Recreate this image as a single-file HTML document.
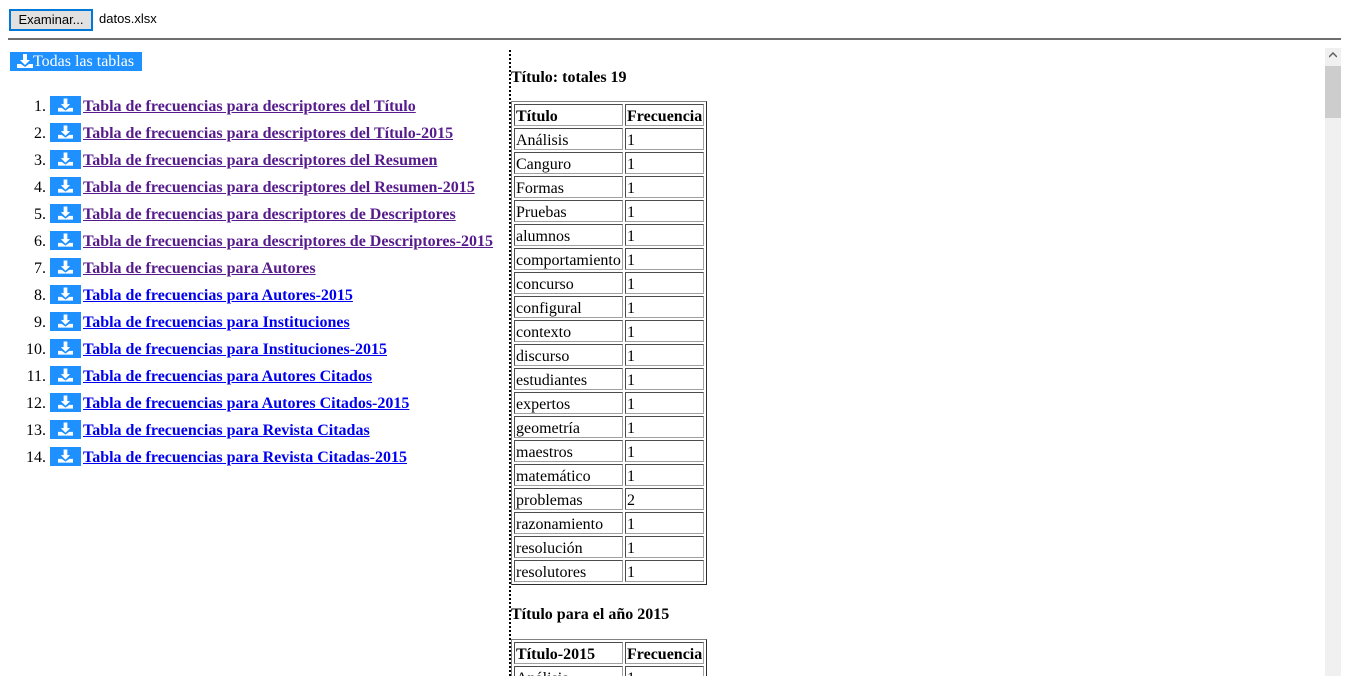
<!DOCTYPE html>
<html><head><meta charset="utf-8"><style>
body{margin:0;width:1349px;height:676px;overflow:hidden;background:#fff;font-family:"Liberation Serif",serif;position:relative}
.fb{position:absolute;left:9px;top:9px;width:80px;height:18px;border:2px solid #0078d7;background:#e1e1e1;font:13px "Liberation Sans",sans-serif;text-align:center;line-height:18px;box-sizing:content-box}
.fn{position:absolute;left:99px;top:11px;font:13px "Liberation Sans",sans-serif}
.hr{position:absolute;left:8px;top:38px;width:1333px;height:2px;background:#6e6e6e}
.all{position:absolute;left:10px;top:52px;width:132px;height:19px;background:#1e90ff;color:#fff;font-size:16px;line-height:20px}
.all svg{vertical-align:-2px;margin-left:7px}
.it{position:absolute;left:0;width:500px;height:20px;font-size:16px;line-height:20px;white-space:nowrap}
.num{position:absolute;left:0;width:46px;text-align:right}
.ib{position:absolute;left:50px;top:-1px;width:31px;height:19px;background:#1e90ff}
.ib svg{position:absolute;left:8px;top:2px}
.lk{position:absolute;left:83px;font-weight:bold;text-decoration:underline}
.v{color:#551a8b}.b{color:#0000ee}
.rp{position:absolute;left:509px;top:50px;width:815px;height:626px;border-left:2px dotted #000;overflow:hidden}
h4{margin:0;position:absolute;left:0;font-size:16px}
table{position:absolute;left:0;border:1px outset #808080;border-spacing:2px;font-size:16px}
td,th{border:1px inset #a0a0a0;padding:3px 1px 0 1px;line-height:17px;height:17px;text-align:left;vertical-align:top}
th:first-child,td:first-child{width:105px}
.sb{position:absolute;left:1325px;top:48px;width:16px;height:628px;background:#f0f0f0}
.th{position:absolute;left:1325px;top:66px;width:16px;height:52px;background:#cdcdcd}
</style></head><body>
<div class="fb">Examinar...</div><div class="fn">datos.xlsx</div>
<div class="hr"></div>
<div class="all"><svg width="16" height="14" viewBox="0 0 16 14"><path d="M6 0h4v6h3l-5 5-5-5h3z M0 10h4l4 3 4-3h4v4H0z" fill="#fff"/></svg>Todas las tablas</div>
<div class="rp">
<h4 style="top:19px">Título: totales 19</h4>
<table style="top:51px"><tr><th>Título</th><th>Frecuencia</th></tr>
<tr><td>Análisis</td><td>1</td></tr><tr><td>Canguro</td><td>1</td></tr><tr><td>Formas</td><td>1</td></tr><tr><td>Pruebas</td><td>1</td></tr><tr><td>alumnos</td><td>1</td></tr><tr><td>comportamiento</td><td>1</td></tr><tr><td>concurso</td><td>1</td></tr><tr><td>configural</td><td>1</td></tr><tr><td>contexto</td><td>1</td></tr><tr><td>discurso</td><td>1</td></tr><tr><td>estudiantes</td><td>1</td></tr><tr><td>expertos</td><td>1</td></tr><tr><td>geometría</td><td>1</td></tr><tr><td>maestros</td><td>1</td></tr><tr><td>matemático</td><td>1</td></tr><tr><td>problemas</td><td>2</td></tr><tr><td>razonamiento</td><td>1</td></tr><tr><td>resolución</td><td>1</td></tr><tr><td>resolutores</td><td>1</td></tr></table>
<h4 style="top:556px">Título para el año 2015</h4>
<table style="top:589px"><tr><th>Título-2015</th><th>Frecuencia</th></tr><tr><td>Análisis</td><td>1</td></tr></table>
</div>
<div class="sb"></div><div class="th"></div>
<svg style="position:absolute;left:1329px;top:52px" width="8" height="6" viewBox="0 0 8 6"><path d="M0 5l4-4 4 4" stroke="#606060" stroke-width="1.5" fill="none"/></svg>
<div style="position:absolute;left:0;top:1px">
<div class="it" style="top:96px"><span class="num">1.</span><span class="ib"><svg width="15" height="14" viewBox="0 0 16 14"><path d="M6 0h4v6h3l-5 5-5-5h3z M0 10h4l4 3 4-3h4v4H0z" fill="#fff"/></svg></span><span class="lk v">Tabla de frecuencias para descriptores del Título</span></div>
<div class="it" style="top:123px"><span class="num">2.</span><span class="ib"><svg width="15" height="14" viewBox="0 0 16 14"><path d="M6 0h4v6h3l-5 5-5-5h3z M0 10h4l4 3 4-3h4v4H0z" fill="#fff"/></svg></span><span class="lk v">Tabla de frecuencias para descriptores del Título-2015</span></div>
<div class="it" style="top:150px"><span class="num">3.</span><span class="ib"><svg width="15" height="14" viewBox="0 0 16 14"><path d="M6 0h4v6h3l-5 5-5-5h3z M0 10h4l4 3 4-3h4v4H0z" fill="#fff"/></svg></span><span class="lk v">Tabla de frecuencias para descriptores del Resumen</span></div>
<div class="it" style="top:177px"><span class="num">4.</span><span class="ib"><svg width="15" height="14" viewBox="0 0 16 14"><path d="M6 0h4v6h3l-5 5-5-5h3z M0 10h4l4 3 4-3h4v4H0z" fill="#fff"/></svg></span><span class="lk v">Tabla de frecuencias para descriptores del Resumen-2015</span></div>
<div class="it" style="top:204px"><span class="num">5.</span><span class="ib"><svg width="15" height="14" viewBox="0 0 16 14"><path d="M6 0h4v6h3l-5 5-5-5h3z M0 10h4l4 3 4-3h4v4H0z" fill="#fff"/></svg></span><span class="lk v">Tabla de frecuencias para descriptores de Descriptores</span></div>
<div class="it" style="top:231px"><span class="num">6.</span><span class="ib"><svg width="15" height="14" viewBox="0 0 16 14"><path d="M6 0h4v6h3l-5 5-5-5h3z M0 10h4l4 3 4-3h4v4H0z" fill="#fff"/></svg></span><span class="lk v">Tabla de frecuencias para descriptores de Descriptores-2015</span></div>
<div class="it" style="top:258px"><span class="num">7.</span><span class="ib"><svg width="15" height="14" viewBox="0 0 16 14"><path d="M6 0h4v6h3l-5 5-5-5h3z M0 10h4l4 3 4-3h4v4H0z" fill="#fff"/></svg></span><span class="lk v">Tabla de frecuencias para Autores</span></div>
<div class="it" style="top:285px"><span class="num">8.</span><span class="ib"><svg width="15" height="14" viewBox="0 0 16 14"><path d="M6 0h4v6h3l-5 5-5-5h3z M0 10h4l4 3 4-3h4v4H0z" fill="#fff"/></svg></span><span class="lk b">Tabla de frecuencias para Autores-2015</span></div>
<div class="it" style="top:312px"><span class="num">9.</span><span class="ib"><svg width="15" height="14" viewBox="0 0 16 14"><path d="M6 0h4v6h3l-5 5-5-5h3z M0 10h4l4 3 4-3h4v4H0z" fill="#fff"/></svg></span><span class="lk b">Tabla de frecuencias para Instituciones</span></div>
<div class="it" style="top:339px"><span class="num">10.</span><span class="ib"><svg width="15" height="14" viewBox="0 0 16 14"><path d="M6 0h4v6h3l-5 5-5-5h3z M0 10h4l4 3 4-3h4v4H0z" fill="#fff"/></svg></span><span class="lk b">Tabla de frecuencias para Instituciones-2015</span></div>
<div class="it" style="top:366px"><span class="num">11.</span><span class="ib"><svg width="15" height="14" viewBox="0 0 16 14"><path d="M6 0h4v6h3l-5 5-5-5h3z M0 10h4l4 3 4-3h4v4H0z" fill="#fff"/></svg></span><span class="lk b">Tabla de frecuencias para Autores Citados</span></div>
<div class="it" style="top:393px"><span class="num">12.</span><span class="ib"><svg width="15" height="14" viewBox="0 0 16 14"><path d="M6 0h4v6h3l-5 5-5-5h3z M0 10h4l4 3 4-3h4v4H0z" fill="#fff"/></svg></span><span class="lk b">Tabla de frecuencias para Autores Citados-2015</span></div>
<div class="it" style="top:420px"><span class="num">13.</span><span class="ib"><svg width="15" height="14" viewBox="0 0 16 14"><path d="M6 0h4v6h3l-5 5-5-5h3z M0 10h4l4 3 4-3h4v4H0z" fill="#fff"/></svg></span><span class="lk b">Tabla de frecuencias para Revista Citadas</span></div>
<div class="it" style="top:447px"><span class="num">14.</span><span class="ib"><svg width="15" height="14" viewBox="0 0 16 14"><path d="M6 0h4v6h3l-5 5-5-5h3z M0 10h4l4 3 4-3h4v4H0z" fill="#fff"/></svg></span><span class="lk b">Tabla de frecuencias para Revista Citadas-2015</span></div>
</div>
</body></html>
